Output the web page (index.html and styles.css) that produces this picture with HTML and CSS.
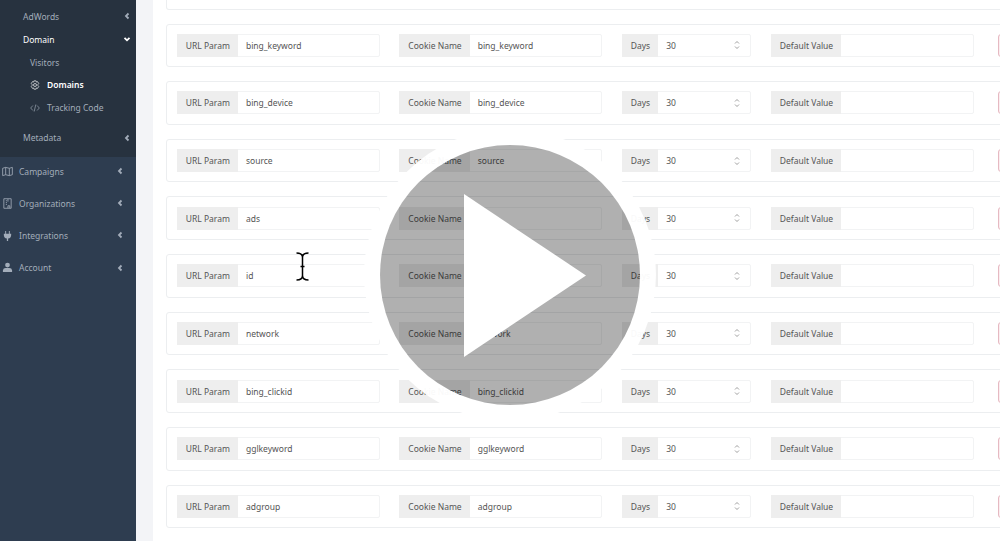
FILE: index.html
```html
<!DOCTYPE html>
<html lang="en">
<head>
    <meta charset="UTF-8">
    <title>Domains</title>
    <link rel="stylesheet" href="styles.css">
</head>
<body>
    <aside class="sidebar">
        <div class="submenu">
            <div class="sub-item">AdWords <svg class="chev" viewBox="0 0 8 8"><path d="M5.500 1.500 3 4l2.500 2.500"/></svg></div>
            <div class="sub-item active">Domain <svg class="chev" viewBox="0 0 8 8"><path d="M1.500 2.800 4 5.300l2.500-2.500"/></svg></div>
            <div class="leaf plain">Visitors</div>
            <div class="leaf current">
                <svg class="leaf-icon" viewBox="0 0 12 12"><circle cx="6" cy="6" r="1.800"/><path d="M4.700 1h2.600l.4 1.500 1.400-.5L10.500 4.300l-1 1.100v1.200l1 1.100L9.100 10l-1.400-.5L7.300 11H4.700l-.4-1.500-1.400.5L1.500 7.700l1-1.100V5.400l-1-1.100L2.900 2l1.400.5z"/></svg>
                Domains
            </div>
            <div class="leaf">
                <svg class="leaf-icon" viewBox="0 0 12 12"><path d="M3.500 3 .8 6l2.700 3M8.500 3l2.700 3-2.700 3M7 1.800 5 10.200"/></svg>
                Tracking Code
            </div>
            <div class="sub-item meta">Metadata <svg class="chev" viewBox="0 0 8 8"><path d="M5.500 1.500 3 4l2.500 2.500"/></svg></div>
        </div>
        <nav class="main-menu">
            <div class="menu-item">
                <svg class="menu-icon" viewBox="0 0 12 12"><path d="M.7 2.500 4 1.500l4 1 3.300-1v8l-3.300 1-4-1-3.300 1zM4 1.500v8M8 2.500v8"/></svg>
                Campaigns
                <svg class="chev" viewBox="0 0 8 8"><path d="M5.500 1.500 3 4l2.500 2.500"/></svg>
            </div>
            <div class="menu-item">
                <svg class="menu-icon" viewBox="0 0 12 12"><path d="M2 .8h8v10.400H2zM4.200 3h1.200M4.200 5h1.200M4.200 7h1.200M6.500 1v3M6.500 11V8.500h2V11"/></svg>
                Organizations
                <svg class="chev" viewBox="0 0 8 8"><path d="M5.500 1.500 3 4l2.500 2.500"/></svg>
            </div>
            <div class="menu-item">
                <svg class="menu-icon solid" viewBox="0 0 12 12"><path d="M3.500 1h1v3h3V1h1v3H10v1.500a4 4 0 0 1-3.300 3.900V12H5.300V9.400A4 4 0 0 1 2 5.500V4h1.500z"/></svg>
                Integrations
                <svg class="chev" viewBox="0 0 8 8"><path d="M5.500 1.500 3 4l2.500 2.500"/></svg>
            </div>
            <div class="menu-item">
                <svg class="menu-icon solid" viewBox="0 0 12 12"><circle cx="6" cy="3.300" r="2.600"/><path d="M1 11V9a3 3 0 0 1 3-2.500h4A3 3 0 0 1 11 9v2z"/></svg>
                Account
                <svg class="chev" viewBox="0 0 8 8"><path d="M5.500 1.500 3 4l2.500 2.500"/></svg>
            </div>
        </nav>
    </aside>

    <main class="content">
        <div class="card partial"></div>

        <div class="card">
            <div class="group"><span class="label">URL Param</span><span class="value">bing_keyword</span></div>
            <div class="group"><span class="label">Cookie Name</span><span class="value">bing_keyword</span></div>
            <div class="group days"><span class="label">Days</span><span class="value">30</span><svg class="spin" viewBox="0 0 6 10"><path d="M1 3.500 3 1.500l2 2M1 6.500l2 2 2-2"/></svg></div>
            <div class="group"><span class="label">Default Value</span><span class="value"></span></div>
            <div class="remove"></div>
        </div>
        <div class="card">
            <div class="group"><span class="label">URL Param</span><span class="value">bing_device</span></div>
            <div class="group"><span class="label">Cookie Name</span><span class="value">bing_device</span></div>
            <div class="group days"><span class="label">Days</span><span class="value">30</span><svg class="spin" viewBox="0 0 6 10"><path d="M1 3.500 3 1.500l2 2M1 6.500l2 2 2-2"/></svg></div>
            <div class="group"><span class="label">Default Value</span><span class="value"></span></div>
            <div class="remove"></div>
        </div>
        <div class="card">
            <div class="group"><span class="label">URL Param</span><span class="value">source</span></div>
            <div class="group"><span class="label">Cookie Name</span><span class="value">source</span></div>
            <div class="group days"><span class="label">Days</span><span class="value">30</span><svg class="spin" viewBox="0 0 6 10"><path d="M1 3.500 3 1.500l2 2M1 6.500l2 2 2-2"/></svg></div>
            <div class="group"><span class="label">Default Value</span><span class="value"></span></div>
            <div class="remove"></div>
        </div>
        <div class="card">
            <div class="group"><span class="label">URL Param</span><span class="value">ads</span></div>
            <div class="group"><span class="label">Cookie Name</span><span class="value">ads</span></div>
            <div class="group days"><span class="label">Days</span><span class="value">30</span><svg class="spin" viewBox="0 0 6 10"><path d="M1 3.500 3 1.500l2 2M1 6.500l2 2 2-2"/></svg></div>
            <div class="group"><span class="label">Default Value</span><span class="value"></span></div>
            <div class="remove"></div>
        </div>
        <div class="card">
            <div class="group"><span class="label">URL Param</span><span class="value">id</span></div>
            <div class="group"><span class="label">Cookie Name</span><span class="value">id</span></div>
            <div class="group days"><span class="label">Days</span><span class="value">30</span><svg class="spin" viewBox="0 0 6 10"><path d="M1 3.500 3 1.500l2 2M1 6.500l2 2 2-2"/></svg></div>
            <div class="group"><span class="label">Default Value</span><span class="value"></span></div>
            <div class="remove"></div>
        </div>
        <div class="card">
            <div class="group"><span class="label">URL Param</span><span class="value">network</span></div>
            <div class="group"><span class="label">Cookie Name</span><span class="value">network</span></div>
            <div class="group days"><span class="label">Days</span><span class="value">30</span><svg class="spin" viewBox="0 0 6 10"><path d="M1 3.500 3 1.500l2 2M1 6.500l2 2 2-2"/></svg></div>
            <div class="group"><span class="label">Default Value</span><span class="value"></span></div>
            <div class="remove"></div>
        </div>
        <div class="card">
            <div class="group"><span class="label">URL Param</span><span class="value">bing_clickid</span></div>
            <div class="group"><span class="label">Cookie Name</span><span class="value">bing_clickid</span></div>
            <div class="group days"><span class="label">Days</span><span class="value">30</span><svg class="spin" viewBox="0 0 6 10"><path d="M1 3.500 3 1.500l2 2M1 6.500l2 2 2-2"/></svg></div>
            <div class="group"><span class="label">Default Value</span><span class="value"></span></div>
            <div class="remove"></div>
        </div>
        <div class="card">
            <div class="group"><span class="label">URL Param</span><span class="value">gglkeyword</span></div>
            <div class="group"><span class="label">Cookie Name</span><span class="value">gglkeyword</span></div>
            <div class="group days"><span class="label">Days</span><span class="value">30</span><svg class="spin" viewBox="0 0 6 10"><path d="M1 3.500 3 1.500l2 2M1 6.500l2 2 2-2"/></svg></div>
            <div class="group"><span class="label">Default Value</span><span class="value"></span></div>
            <div class="remove"></div>
        </div>
        <div class="card">
            <div class="group"><span class="label">URL Param</span><span class="value">adgroup</span></div>
            <div class="group"><span class="label">Cookie Name</span><span class="value">adgroup</span></div>
            <div class="group days"><span class="label">Days</span><span class="value">30</span><svg class="spin" viewBox="0 0 6 10"><path d="M1 3.500 3 1.500l2 2M1 6.500l2 2 2-2"/></svg></div>
            <div class="group"><span class="label">Default Value</span><span class="value"></span></div>
            <div class="remove"></div>
        </div>
    </main>

    <!-- text cursor and video play button lie over the form -->
    <svg class="cursor" viewBox="0 0 13 29"><path d="M.5 1c3 0 6 1 6 4.500v18C6.500 27 3.500 28 .5 28M12.500 1c-3 0-6 1-6 4.500v18c0 3.500 3 4.500 6 4.500M4.500 14.500h4"/></svg>
    <div class="play">
        <svg class="play-arrow" viewBox="0 0 122 163"><path d="M0 0 122 81.500 0 163z"/></svg>
    </div>
</body>
</html>
```

FILE: styles.css
```css
* {
    box-sizing: border-box;
}
html, body {
    height: 100%;
}
body {
    display: flex;
    margin: 0;
    overflow: hidden;
    font-family: "Noto Sans", Arial, sans-serif;
    font-size: 8.500px;
    color: #555;
    background-color: #f3f4f7;
}

/* sidebar */
.sidebar {
    flex: 0 0 136px;
    background-color: #2e3d50;
    color: #a3adba;
}
.submenu {
    height: 157px;
    padding-top: 4.500px;
    background-color: #27323f;
}
.sub-item {
    display: flex;
    align-items: center;
    justify-content: space-between;
    height: 23px;
    padding: 0 5px 0 23px;
}
.sub-item.active {
    color: #fff;
}
.sub-item.meta {
    margin-top: 6.700px;
}
.leaf {
    display: flex;
    align-items: center;
    gap: 7px;
    height: 23px;
    padding-left: 30px;
}
.leaf.plain {
    gap: 0;
    margin-bottom: -.2px;
}
.leaf.current {
    color: #fff;
    font-weight: 600;
}
.leaf-icon {
    width: 10px;
    height: 10px;
    fill: none;
    stroke: currentColor;
    stroke-width: .8;
}
.chev {
    width: 8px;
    height: 8px;
    fill: none;
    stroke: currentColor;
    stroke-width: 1.800;
}
.main-menu {
    margin-top: -2px;
}
.menu-item {
    display: flex;
    align-items: center;
    height: 32.200px;
    padding: 0 12px 0 2px;
}
.menu-item .chev {
    margin-left: auto;
}
.menu-icon {
    flex: none;
    width: 11px;
    height: 11px;
    margin-right: 6px;
    fill: none;
    stroke: currentColor;
    stroke-width: .9;
}
.menu-icon.solid {
    fill: currentColor;
    stroke: none;
}

/* form rows */
.content {
    flex: 1;
    min-width: 0;
    display: flex;
    flex-direction: column;
    gap: 14px;
    margin-left: 17px;
    padding-left: 13px;
    overflow: hidden;
    background-color: #fff;
}
.card {
    flex: none;
    display: flex;
    align-items: center;
    width: 860px;
    height: 43.625px;
    padding-left: 9.800px;
    border: 1px solid #eceef0;
    border-radius: 3px;
}
.card.partial {
    height: 9.500px;
    border-top: none;
    border-radius: 0 0 3px 3px;
}
.group {
    flex: none;
    display: flex;
    position: relative;
    width: 203px;
    height: 23px;
    margin-right: 19.500px;
    border: 1px solid #f2f3f4;
    border-radius: 2px;
}
.group.days {
    width: 129px;
    margin-right: 20px;
}
.label {
    display: flex;
    align-items: center;
    margin: -1px 0 -1px -1px;
    padding: 0 8px 0 9px;
    background-color: #eeeeee;
    color: #555;
    white-space: nowrap;
}
.value {
    align-self: center;
    padding-left: 8px;
}
.spin {
    position: absolute;
    top: 5.500px;
    right: 10px;
    width: 6px;
    height: 10px;
    fill: none;
    stroke: #777;
    stroke-width: .7;
}
.remove {
    flex: none;
    width: 30px;
    height: 23px;
    margin-left: 4.500px;
    border: 1px solid #e6b9c2;
    border-radius: 3px;
    background-color: #fbeef0;
}

/* overlays */
.cursor {
    position: absolute;
    left: 296px;
    top: 252px;
    width: 13px;
    height: 29px;
    fill: none;
    stroke: #000;
    stroke-width: 1.500;
}
.play {
    position: absolute;
    left: 380px;
    top: 145px;
    width: 260px;
    height: 260px;
    border-radius: 50%;
    background-color: rgba(0, 0, 0, 0.31);
    box-shadow: 0 0 0 16px rgba(255, 255, 255, 0.96);
}
.play-arrow {
    position: absolute;
    left: 84px;
    top: 49px;
    width: 122px;
    height: 163px;
    fill: #fff;
}
```
